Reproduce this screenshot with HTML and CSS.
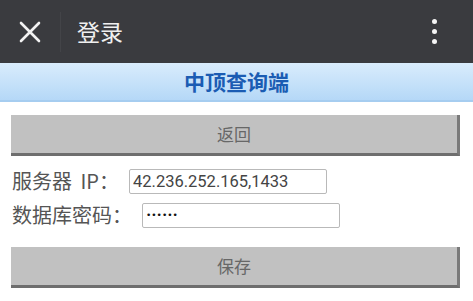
FILE: index.html
```html
<!DOCTYPE html>
<html lang="zh">
<head>
<meta charset="utf-8">
<link rel="stylesheet" href="styles.css">
</head>
<body>
<header class="topbar">
  <div class="close">
    <svg width="22" height="22" viewBox="0 0 22 22"><path d="M2 2 L20 20 M20 2 L2 20" stroke="#f2f2f2" stroke-width="2.6" stroke-linecap="round"/></svg>
  </div>
  <div class="sep"></div>
  <div class="title">登录</div>
  <div class="dots"><span></span><span></span><span></span></div>
</header>
<div class="banner">中顶查询端</div>
<main class="content">
  <button class="btn">返回</button>
  <div class="row row-ip">
    <span class="label label-ip">服务器 IP：</span>
    <input class="field" type="text" value="42.236.252.165,1433">
  </div>
  <div class="row row-pw">
    <span class="label">数据库密码：</span>
    <input class="field field-pw" type="password" value="123456">
  </div>
  <button class="btn btn-save">保存</button>
</main>
</body>
</html>
```
FILE: styles.css
```css
* { box-sizing: border-box; }
html, body { margin: 0; padding: 0; background: #ffffff; }
body {
  width: 473px;
  height: 301px;
  overflow: hidden;
  font-family: "Noto Sans CJK SC", "Noto Sans", sans-serif;
}
.topbar {
  height: 63px;
  background: #3a3b3f;
  display: flex;
  align-items: center;
}
.close {
  width: 60px;
  display: flex;
  justify-content: center;
}
.sep {
  width: 1px;
  height: 40px;
  background: #434448;
}
.title {
  padding-left: 16px;
  color: #efefef;
  font-size: 23px;
  line-height: 1;
  flex: 1;
}
.dots {
  width: 6px;
  margin-right: 35px;
  display: flex;
  flex-direction: column;
  gap: 5px;
}
.dots span {
  width: 5px;
  height: 5px;
  border-radius: 50%;
  background: #f5f5f5;
}
.banner {
  height: 39px;
  background: linear-gradient(#d9ecfc, #b5d8f7);
  border-bottom: 2px solid #a6cdf0;
  color: #1b5cb3;
  font-weight: bold;
  font-size: 21px;
  text-align: center;
  line-height: 37px;
}
.content {
  padding: 13px 13px 0 11px;
}
.btn {
  display: block;
  width: 449px;
  height: 41px;
  margin: 0;
  padding: 0;
  border: none;
  border-right: 3px solid #7a7a7a;
  border-bottom: 3px solid #6e6e6e;
  background: #c1c1c1;
  color: #676767;
  font-family: "Noto Sans CJK SC", sans-serif;
  font-size: 17px;
  line-height: 38px;
}
.row {
  display: flex;
  align-items: center;
  height: 34px;
  gap: 10px;
}
.row-ip { margin-top: 8px; }
.label {
  padding-left: 1px;
  color: #555555;
  font-size: 20px;
  line-height: 1;
  white-space: pre;
}
.label-ip { word-spacing: 4px; }
.field {
  width: 198px;
  height: 25px;
  border: 1px solid #b9b9b9;
  border-radius: 2px;
  padding: 0 3px;
  font-family: Roboto, sans-serif;
  font-size: 16.5px;
  color: #444;
  background: #fff;
  outline: none;
}
.field-pw { font-family: "DejaVu Sans", sans-serif; font-size: 9px; letter-spacing: 0; color: #111; }
.btn-save { margin-top: 15px; }
```
